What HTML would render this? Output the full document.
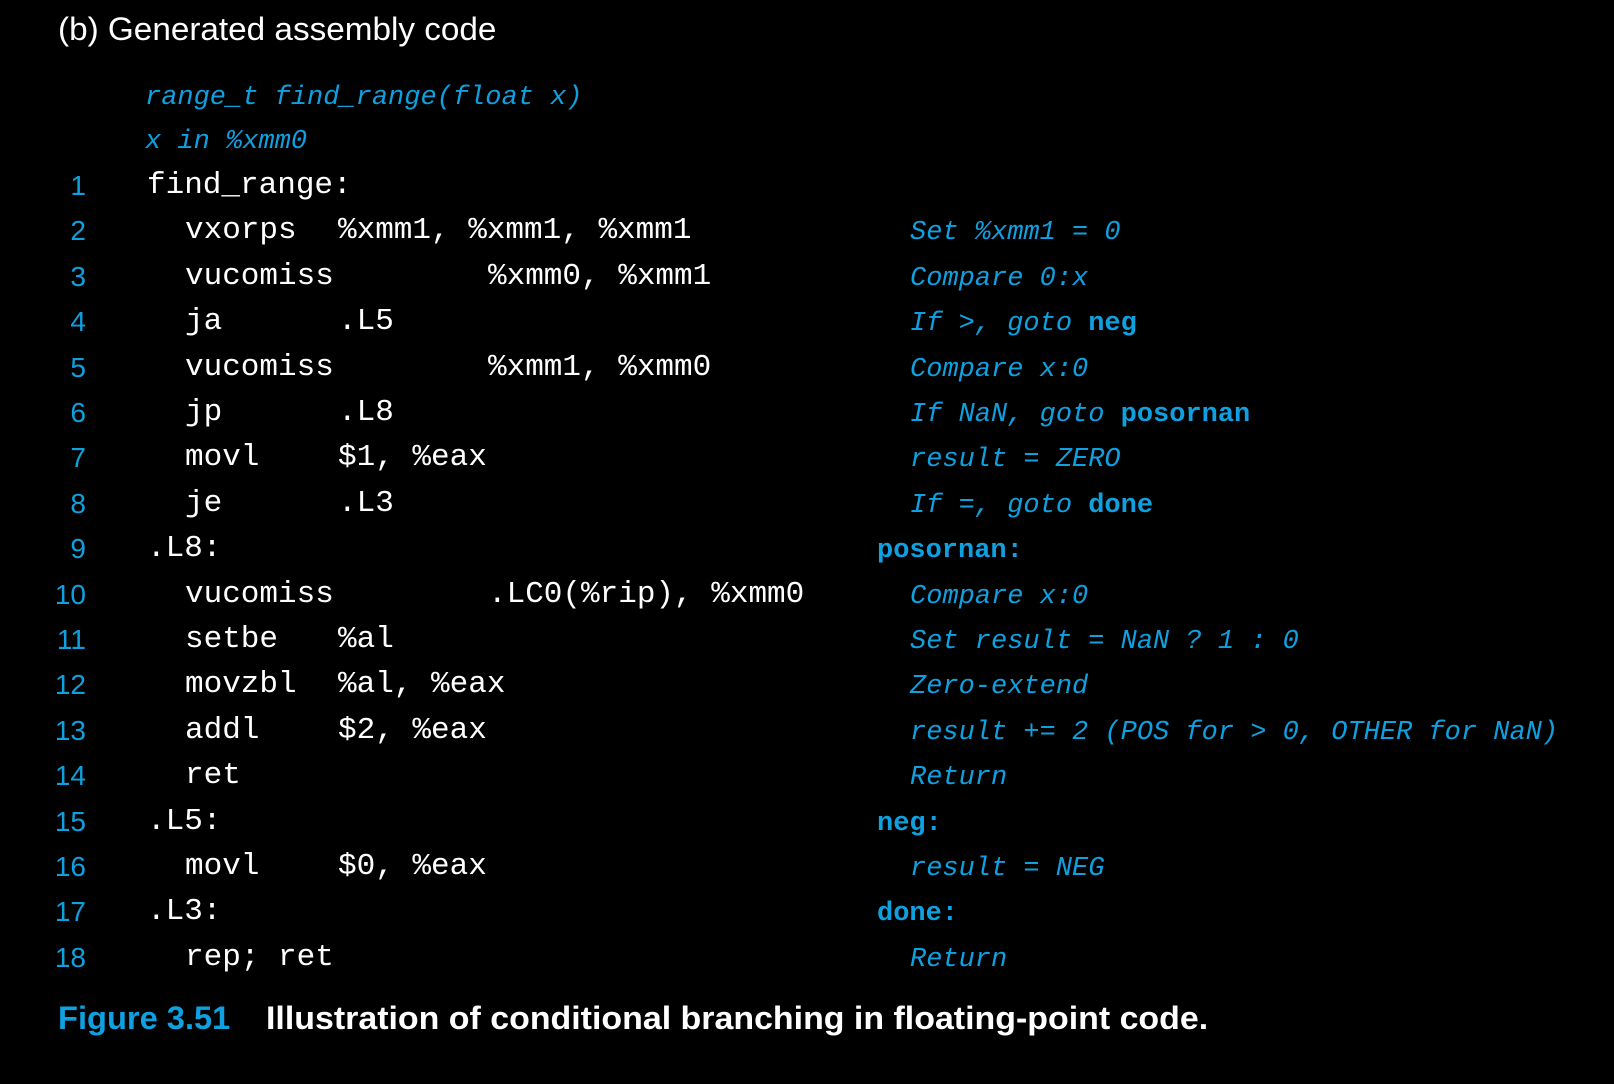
<!DOCTYPE html>
<html><head><meta charset="utf-8"><style>
html,body{margin:0;padding:0;background:#000;width:1614px;height:1084px;overflow:hidden;position:relative}
div{position:absolute;white-space:pre;line-height:40px;height:40px}
.m{font-family:"Liberation Mono",monospace;font-size:31px;color:#fff}
.c{font-family:"Liberation Mono",monospace;font-size:27px;color:#0fa0e0;font-style:italic}
.b{font-family:"Liberation Mono",monospace;font-size:27px;color:#0fa0e0;font-weight:bold}
.b2{font-style:normal;font-weight:bold}
.n{font-family:"Liberation Sans",sans-serif;font-size:28px;color:#0fa0e0;width:40px;left:46px;text-align:right}
.s{font-family:"Liberation Sans",sans-serif;color:#fff}
</style></head><body>
<div class="s" style="left:58px;top:9px;font-size:32px;transform-origin:0 50%;transform:scaleX(1.04)">(b) Generated assembly code</div>
<div class="c" style="left:145px;top:78px">range_t find_range(float x)</div>
<div class="c" style="left:145px;top:122px">x in %xmm0</div>

<div class="n" style="top:166px">1</div><div class="m" style="left:147px;top:166px">find_range:</div>
<div class="n" style="top:211px">2</div><div class="m" style="left:185px;top:211px">vxorps</div><div class="m" style="left:338px;top:211px">%xmm1, %xmm1, %xmm1</div><div class="c" style="left:910px;top:213px">Set %xmm1 = 0</div>
<div class="n" style="top:257px">3</div><div class="m" style="left:185px;top:257px">vucomiss</div><div class="m" style="left:488px;top:257px">%xmm0, %xmm1</div><div class="c" style="left:910px;top:259px">Compare 0:x</div>
<div class="n" style="top:302px">4</div><div class="m" style="left:185px;top:302px">ja</div><div class="m" style="left:338px;top:302px">.L5</div><div class="c" style="left:910px;top:304px">If &gt;, goto <span class="b2">neg</span></div>
<div class="n" style="top:348px">5</div><div class="m" style="left:185px;top:348px">vucomiss</div><div class="m" style="left:488px;top:348px">%xmm1, %xmm0</div><div class="c" style="left:910px;top:350px">Compare x:0</div>
<div class="n" style="top:393px">6</div><div class="m" style="left:185px;top:393px">jp</div><div class="m" style="left:338px;top:393px">.L8</div><div class="c" style="left:910px;top:395px">If NaN, goto <span class="b2">posornan</span></div>
<div class="n" style="top:438px">7</div><div class="m" style="left:185px;top:438px">movl</div><div class="m" style="left:338px;top:438px">$1, %eax</div><div class="c" style="left:910px;top:440px">result = ZERO</div>
<div class="n" style="top:484px">8</div><div class="m" style="left:185px;top:484px">je</div><div class="m" style="left:338px;top:484px">.L3</div><div class="c" style="left:910px;top:486px">If =, goto <span class="b2">done</span></div>
<div class="n" style="top:529px">9</div><div class="m" style="left:147px;top:529px">.L8:</div><div class="b" style="left:877px;top:531px">posornan:</div>
<div class="n" style="top:575px">10</div><div class="m" style="left:185px;top:575px">vucomiss</div><div class="m" style="left:488px;top:575px">.LC0(%rip), %xmm0</div><div class="c" style="left:910px;top:577px">Compare x:0</div>
<div class="n" style="top:620px">11</div><div class="m" style="left:185px;top:620px">setbe</div><div class="m" style="left:338px;top:620px">%al</div><div class="c" style="left:910px;top:622px">Set result = NaN ? 1 : 0</div>
<div class="n" style="top:665px">12</div><div class="m" style="left:185px;top:665px">movzbl</div><div class="m" style="left:338px;top:665px">%al, %eax</div><div class="c" style="left:910px;top:667px">Zero-extend</div>
<div class="n" style="top:711px">13</div><div class="m" style="left:185px;top:711px">addl</div><div class="m" style="left:338px;top:711px">$2, %eax</div><div class="c" style="left:910px;top:713px">result += 2 (POS for &gt; 0, OTHER for NaN)</div>
<div class="n" style="top:756px">14</div><div class="m" style="left:185px;top:756px">ret</div><div class="c" style="left:910px;top:758px">Return</div>
<div class="n" style="top:802px">15</div><div class="m" style="left:147px;top:802px">.L5:</div><div class="b" style="left:877px;top:804px">neg:</div>
<div class="n" style="top:847px">16</div><div class="m" style="left:185px;top:847px">movl</div><div class="m" style="left:338px;top:847px">$0, %eax</div><div class="c" style="left:910px;top:849px">result = NEG</div>
<div class="n" style="top:892px">17</div><div class="m" style="left:147px;top:892px">.L3:</div><div class="b" style="left:877px;top:894px">done:</div>
<div class="n" style="top:938px">18</div><div class="m" style="left:185px;top:938px">rep; ret</div><div class="c" style="left:910px;top:940px">Return</div>

<div class="s" style="left:58px;top:998px;font-size:32px;font-weight:bold;color:#0fa0e0;transform-origin:0 50%;transform:scaleX(1.02)">Figure 3.51</div>
<div class="s" style="left:266px;top:998px;font-size:32px;font-weight:bold;transform-origin:0 50%;transform:scaleX(1.06)">Illustration of conditional branching in floating-point code.</div>
</body></html>
